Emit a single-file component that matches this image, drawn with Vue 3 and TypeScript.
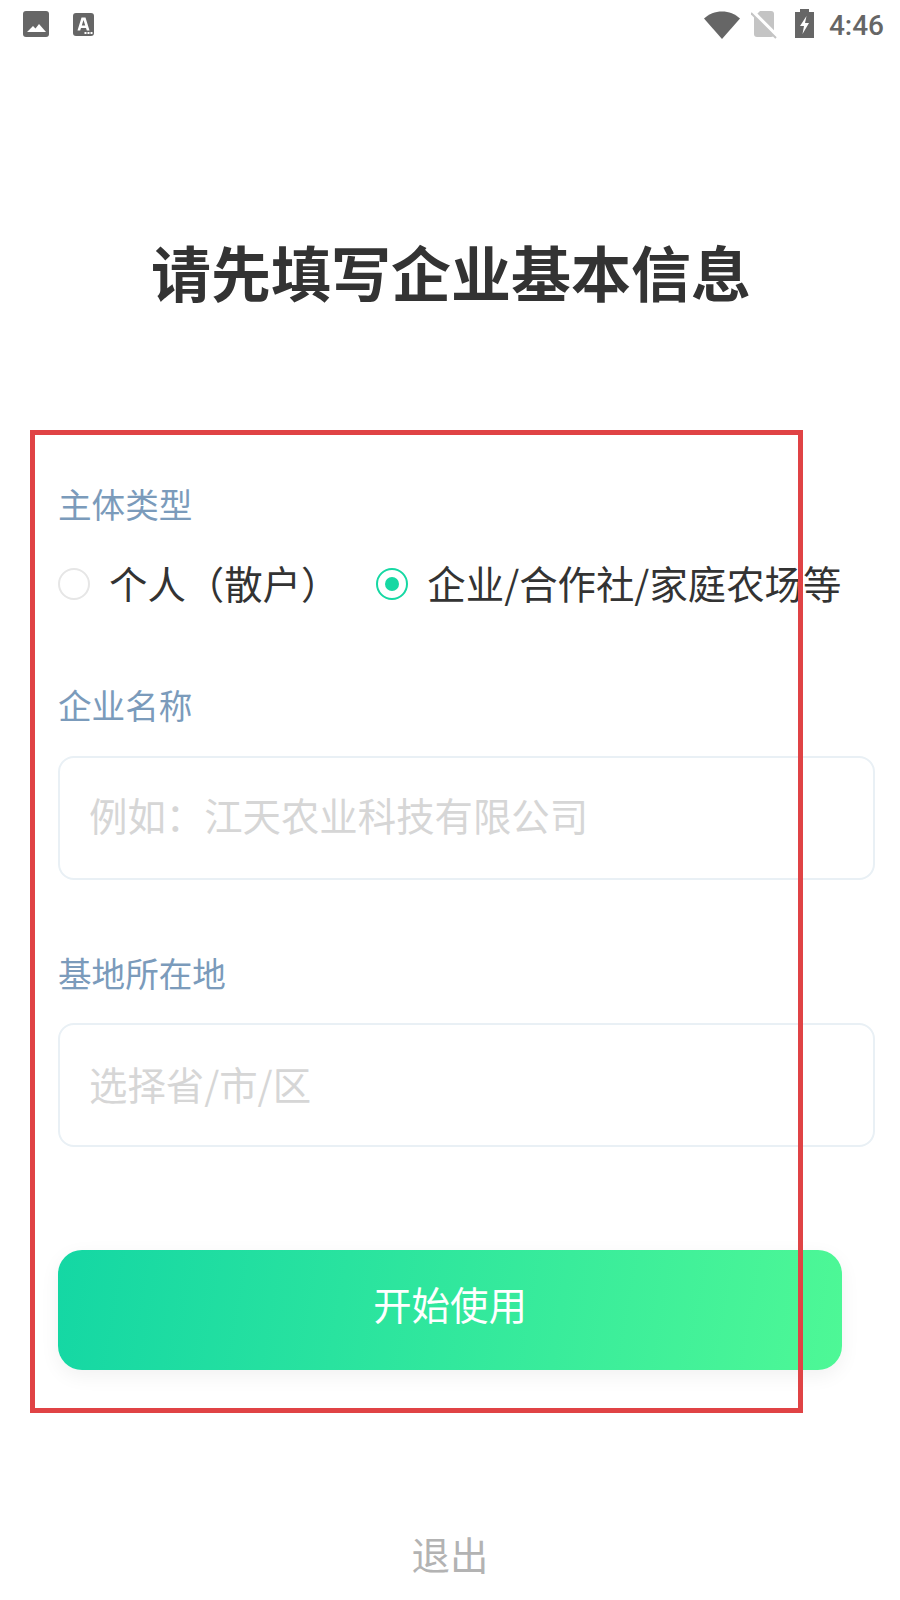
<template>
  <div class="page">
    <div class="status-bar">
      <div class="status-left">
        <svg width="26" height="26" viewBox="0 0 26 26">
          <rect width="26" height="26" rx="3" fill="#666" />
          <path d="M4 21 L10 15 L12.5 17.5 L16 13 L23 21 Z" fill="#fff" />
        </svg>
        <svg width="21" height="23" viewBox="0 0 21 23">
          <rect width="21" height="23" rx="3" fill="#666" />
          <path d="M4.5 17.5 L8.5 4.5 H12.5 L16.5 17.5 H13.8 L13 15 H8 L7.2 17.5 Z M8.8 12.5 H12.2 L10.5 7 Z" fill="#fff" fill-rule="evenodd" />
          <rect x="11.5" y="19" width="2" height="2" fill="#fff" />
          <rect x="14.5" y="19" width="2" height="2" fill="#fff" />
          <rect x="17.5" y="19" width="2" height="2" fill="#fff" />
        </svg>
      </div>
      <div class="status-right">
        <svg width="36" height="28" viewBox="0 0 36 28">
          <path d="M0 7.5 C5 3 11 0.5 18 0.5 C25 0.5 31 3 36 7.5 L18 28 Z" fill="#666" />
        </svg>
        <svg class="ic-sim" width="27" height="30" viewBox="0 0 27 30">
          <path d="M9 1 H20 Q23 1 23 4 V24 Q23 27 20 27 H6 Q3 27 3 24 V7 Z" fill="#c4c4c4" />
          <path d="M1 1 L26 26" stroke="#fff" stroke-width="4" />
          <path d="M0 3 L25 28" stroke="#c4c4c4" stroke-width="2" />
        </svg>
        <svg class="ic-bat" width="20" height="29" viewBox="0 0 20 29">
          <path d="M5 0 H14 V3 H19 V29 H0 V3 H5 Z" fill="#666" />
          <path d="M11.5 7 L5 17 H9 L7.5 25 L14 14 H10 Z" fill="#fff" />
        </svg>
        <span class="time">4:46</span>
      </div>
    </div>

    <h1 class="title">请先填写企业基本信息</h1>

    <div class="form">
      <div class="red-box"></div>

      <div class="label">主体类型</div>
      <div class="radios">
        <div v-for="item in types" :key="item.id" class="radio" @click="current = item.id">
          <span class="dot" :class="{ checked: current === item.id }"></span>
          <span class="radio-text">{{ item.name }}</span>
        </div>
      </div>

      <div class="label name-label">企业名称</div>
      <div class="field">例如：江天农业科技有限公司</div>

      <div class="label place-label">基地所在地</div>
      <div class="field place-field">选择省/市/区</div>

      <button class="submit">开始使用</button>
    </div>

    <div class="logout">退出</div>
  </div>
</template>

<script setup lang="ts">
import { ref } from 'vue';

interface SubjectType {
  id: number;
  name: string;
}

const types: SubjectType[] = [
  { id: 1, name: '个人（散户）' },
  { id: 2, name: '企业/合作社/家庭农场等' },
];

const current = ref(2);
</script>

<style>
html,
body {
  background: #fff;
}
</style>

<style scoped>
.page {
  width: 900px;
  height: 1600px;
  overflow: hidden;
  background: #fff;
  font-family: "Noto Sans CJK SC", "Noto Sans", sans-serif;
}
.status-bar {
  height: 50px;
  display: flex;
  justify-content: space-between;
  align-items: center;
  padding: 0 16px 0 23px;
}
.status-left {
  display: flex;
  align-items: center;
  gap: 24px;
  margin-bottom: 2px;
}
.status-right {
  display: flex;
  align-items: center;
}
.ic-sim {
  margin: 0 17px 0 11px;
}
.ic-bat {
  margin: 0 14px 3px 0;
}
.time {
  font-family: Roboto, sans-serif;
  font-weight: 500;
  font-size: 28px;
  color: #666;
}
.title {
  margin: 186px 0 0;
  padding-left: 2px;
  text-align: center;
  font-size: 60px;
  line-height: 70px;
  font-weight: 700;
  color: #333;
}
.form {
  position: relative;
  margin-top: 124px;
  padding: 54px 0 0 58px;
  height: 983px;
  box-sizing: border-box;
}
.red-box {
  position: absolute;
  left: 30px;
  top: 0;
  width: 773px;
  height: 983px;
  box-sizing: border-box;
  border: 5px solid #e04345;
  z-index: 2;
}
.label {
  font-size: 33.6px;
  line-height: 40px;
  color: #7b9bbb;
}
.radios {
  display: flex;
  margin-top: 34px;
  gap: 37px;
}
.radio {
  display: flex;
  align-items: center;
  gap: 19px;
  font-size: 38.4px;
  line-height: 48px;
  color: #333;
}
.radio-text {
  margin-bottom: 4px;
}
.dot {
  width: 32px;
  height: 32px;
  box-sizing: border-box;
  border: 2px solid #e6e6e6;
  border-radius: 50%;
  display: flex;
  align-items: center;
  justify-content: center;
}
.dot.checked {
  border-color: #16d8a3;
}
.dot.checked::after {
  content: "";
  width: 14px;
  height: 14px;
  border-radius: 50%;
  background: #16d8a3;
}
.name-label {
  margin-top: 75px;
}
.place-label {
  margin-top: 73px;
}
.field {
  width: 817px;
  height: 124px;
  margin-top: 31px;
  box-sizing: border-box;
  padding: 0 0 8px 29px;
  border: 2px solid #e9f0f5;
  border-radius: 16px;
  display: flex;
  align-items: center;
  font-size: 38.4px;
  color: #d6d6d6;
}
.place-field {
  margin-top: 30px;
  padding-bottom: 4px;
}
.submit {
  display: block;
  width: 784px;
  height: 120px;
  margin-top: 103px;
  padding: 0 0 14px;
  border: none;
  border-radius: 24px;
  background: linear-gradient(100deg, #14d7a4, #4ef896);
  box-shadow: 0 6px 20px rgba(0, 0, 0, 0.06);
  color: #fff;
  font-family: inherit;
  font-size: 38.4px;
}
.logout {
  margin-top: 116px;
  text-align: center;
  font-size: 38.4px;
  line-height: 48px;
  color: #b3b3b3;
}
</style>
